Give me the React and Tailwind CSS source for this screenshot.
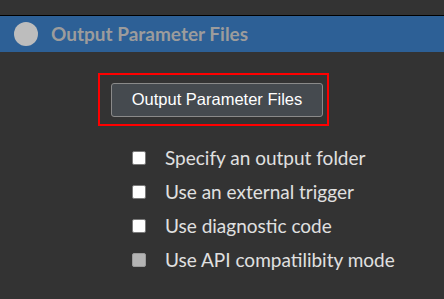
import React from "react";

const options = [
  { label: "Specify an output folder", disabled: false },
  { label: "Use an external trigger", disabled: false },
  { label: "Use diagnostic code", disabled: false },
  { label: "Use API compatilibity mode", disabled: true },
];

export default function App() {
  return (
    <div className="w-[444px] h-[299px] bg-[#333333] overflow-hidden" style={{ fontFamily: "Lato, 'Liberation Sans', sans-serif" }}>
      <div className="h-[15px]" />
      <div className="h-[1px] bg-black" />
      <div className="h-[36px] bg-[#2d6096] flex items-center pl-[14px]">
        <span className="w-[24px] h-[24px] rounded-full bg-[#bdbdbd]" />
        <span className="ml-[13px] text-[19px] font-bold text-[#9c9c9c]">Output Parameter Files</span>
      </div>
      <div className="pl-[98px] pt-[21px]">
        <div className="w-[231px] h-[53px] border-2 border-[#ff0000] flex items-center pl-[11px]">
          <button
            type="button"
            className="w-[212px] h-[34px] bg-[#454a4f] border border-[#8a8a8a] rounded-[3px] text-white text-[16.5px]"
            style={{ fontFamily: "'Liberation Sans', Arial, sans-serif" }}
          >
            Output Parameter Files
          </button>
        </div>
      </div>
      <div className="pl-[132px] pt-[15px] flex flex-col">
        {options.map((o) => (
          <div key={o.label} className="h-[34px] flex items-center">
            <span
              className={
                o.disabled
                  ? "w-[14px] h-[14px] rounded-[2px] bg-[#b4b4b4] border border-[#9a9a9a]"
                  : "w-[14px] h-[14px] rounded-[2px] bg-white border border-[#7a7a7a]"
              }
            />
            <span className="ml-[19px] text-[19px] text-[#e0e0e0]">{o.label}</span>
          </div>
        ))}
      </div>
    </div>
  );
}
